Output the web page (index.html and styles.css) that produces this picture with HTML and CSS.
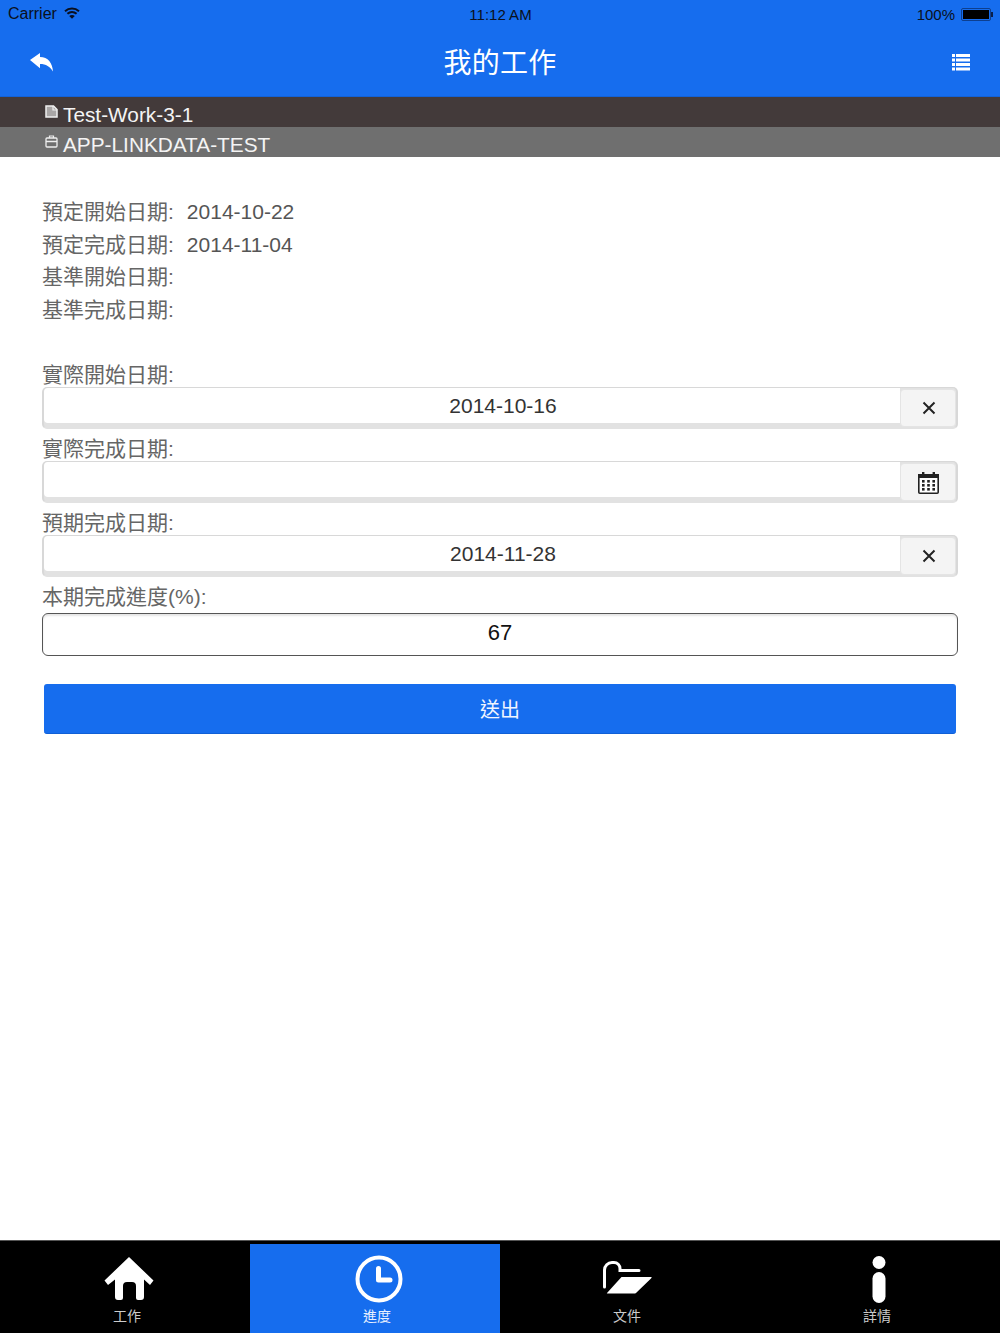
FILE: index.html
```html
<!DOCTYPE html>
<html lang="zh-Hant">
<head>
    <meta charset="UTF-8">
    <meta name="viewport" content="width=device-width, initial-scale=1.0">
    <title>我的工作</title>
    <link rel="stylesheet" href="styles.css">
</head>
<body>
    <div class="page">
        <div class="top">
            <div class="status">
                <div class="status-left">
                    <span>Carrier</span>
                    <svg class="wifi" width="16" height="12" viewBox="0 0 16 12">
                        <path d="M1 4.200C5 .6 11 .6 15 4.200" fill="none" stroke="#0a1020" stroke-width="2"/>
                        <path d="M3.400 6.800c2.700-2.300 6.500-2.300 9.200 0" fill="none" stroke="#0a1020" stroke-width="2"/>
                        <path d="M8 11.800 5.200 9c1.600-1.300 4-1.300 5.600 0z" fill="#0a1020"/>
                    </svg>
                </div>
                <div class="status-time">11:12 AM</div>
                <div class="status-right">
                    <span>100%</span>
                    <div class="battery"><div class="battery-fill"></div></div>
                    <div class="battery-tip"></div>
                </div>
            </div>
            <div class="nav">
                <svg width="23" height="19" viewBox="0 0 23 19">
                    <path d="M0 7 10 0v4c8 0 12.500 6 13 14.500C20 13.500 16 11 10 11v4.300z" fill="#fff"/>
                </svg>
                <div class="nav-title">我的工作</div>
                <svg class="nav-list" width="18" height="17" viewBox="0 0 18 17" fill="#fff">
                    <rect x="0" y="0" width="3" height="3"/><rect x="4" y="0" width="14" height="3"/>
                    <rect x="0" y="4.500" width="3" height="3"/><rect x="4" y="4.500" width="14" height="3"/>
                    <rect x="0" y="9" width="3" height="3"/><rect x="4" y="9" width="14" height="3"/>
                    <rect x="0" y="13.500" width="3" height="3"/><rect x="4" y="13.500" width="14" height="3"/>
                </svg>
            </div>
        </div>

        <div class="bar bar-dark">
            <svg class="bar-icon" width="13" height="13" viewBox="0 0 13 13">
                <path d="M1 1h7.500L12 4.500V12H1z" fill="#a9a6a6" stroke="#f0f0f0" stroke-width="1.500"/>
                <path d="M8 1v4h4" fill="none" stroke="#f0f0f0" stroke-width="1.200"/>
            </svg>
            <span>Test-Work-3-1</span>
        </div>
        <div class="bar bar-gray">
            <svg class="bar-icon" width="13" height="13" viewBox="0 0 13 13">
                <path d="M4.500 3V1h4v2" fill="none" stroke="#eee" stroke-width="1.200"/>
                <rect x="1" y="3" width="11" height="9" rx="1" fill="none" stroke="#eee" stroke-width="1.300"/>
                <path d="M1 6.500h11" stroke="#eee" stroke-width="1.500"/>
            </svg>
            <span>APP-LINKDATA-TEST</span>
        </div>

        <div class="content">
            <div class="info">
                <div class="info-row"><span class="info-label">預定開始日期:</span>2014-10-22</div>
                <div class="info-row"><span class="info-label">預定完成日期:</span>2014-11-04</div>
                <div class="info-row"><span class="info-label">基準開始日期:</span></div>
                <div class="info-row"><span class="info-label">基準完成日期:</span></div>
            </div>

            <div class="field">
                <label class="field-label">實際開始日期:</label>
                <div class="date-input">
                    <div class="date-value">2014-10-16</div>
                    <div class="date-btn">
                        <svg width="14" height="14" viewBox="0 0 14 14"><path d="M1.500 1.500l11 11M12.500 1.500l-11 11" stroke="#222" stroke-width="2"/></svg>
                    </div>
                </div>
            </div>
            <div class="field">
                <label class="field-label">實際完成日期:</label>
                <div class="date-input">
                    <div class="date-value"></div>
                    <div class="date-btn">
                        <svg class="cal" width="21" height="22" viewBox="0 0 21 22">
                            <rect x="0.800" y="2.800" width="19.400" height="18.400" rx="1" fill="#fff" stroke="#222" stroke-width="1.600"/>
                            <rect x="0" y="2" width="21" height="4" fill="#222"/>
                            <rect x="4" y="0" width="2.400" height="4" fill="#222"/><rect x="14.600" y="0" width="2.400" height="4" fill="#222"/>
                            <g fill="#222">
                                <rect x="4" y="8" width="2.600" height="2.600"/><rect x="9.200" y="8" width="2.600" height="2.600"/><rect x="14.400" y="8" width="2.600" height="2.600"/>
                                <rect x="4" y="12" width="2.600" height="2.600"/><rect x="9.200" y="12" width="2.600" height="2.600"/><rect x="14.400" y="12" width="2.600" height="2.600"/>
                                <rect x="4" y="16" width="2.600" height="2.600"/><rect x="9.200" y="16" width="2.600" height="2.600"/><rect x="14.400" y="16" width="2.600" height="2.600"/>
                            </g>
                        </svg>
                    </div>
                </div>
            </div>
            <div class="field">
                <label class="field-label">預期完成日期:</label>
                <div class="date-input">
                    <div class="date-value">2014-11-28</div>
                    <div class="date-btn">
                        <svg width="14" height="14" viewBox="0 0 14 14"><path d="M1.500 1.500l11 11M12.500 1.500l-11 11" stroke="#222" stroke-width="2"/></svg>
                    </div>
                </div>
            </div>
            <div class="field">
                <label class="field-label">本期完成進度(%):</label>
                <div class="num-input">67</div>
            </div>
            <button class="submit">送出</button>
        </div>

        <div class="tabs">
            <div class="tab">
                <div class="tab-icon">
                    <svg width="50" height="44" viewBox="0 0 50 44" fill="#fff">
                        <path d="M25 0 49.500 23.500 46 28 40 22.500V40a3 3 0 0 1-3 3h-3a2 2 0 0 1-2-2V29a4 4 0 0 0-4-4h-5a4 4 0 0 0-4 4v12a2 2 0 0 1-2 2h-3a3 3 0 0 1-3-3V22.500L4 28 .5 23.500z"/>
                    </svg>
                </div>
                <span>工作</span>
            </div>
            <div class="tab tab-active">
                <div class="tab-icon">
                    <svg width="48" height="48" viewBox="0 0 48 48">
                        <circle cx="24" cy="24" r="21.500" fill="none" stroke="#fff" stroke-width="4"/>
                        <path d="M23.500 13.500V25H35" fill="none" stroke="#fff" stroke-width="5" stroke-linecap="round" stroke-linejoin="round"/>
                    </svg>
                </div>
                <span>進度</span>
            </div>
            <div class="tab">
                <div class="tab-icon">
                    <svg class="folder" width="49" height="33" viewBox="0 0 49 33" fill="#fff">
                        <path d="M1.500 26V9A7.500 7.500 0 0 1 9 1.500h2a6 6 0 0 1 6 6v2h19" fill="none" stroke="#fff" stroke-width="3" stroke-linecap="round"/>
                        <path d="M4 32 18.500 16h29c1.500 0 1.500.5.500 1.500L34 31c-1 1-1.500 1.500-3 1.500H5c-1 0-1.500-.5-1-.5z"/>
                    </svg>
                </div>
                <span>文件</span>
            </div>
            <div class="tab">
                <div class="tab-icon">
                    <svg width="14" height="47" viewBox="0 0 14 47" fill="#fff">
                        <circle cx="7" cy="6.500" r="6.500"/>
                        <rect x="0.500" y="16" width="13" height="31" rx="6.500"/>
                    </svg>
                </div>
                <span>詳情</span>
            </div>
        </div>
    </div>
</body>
</html>
```

FILE: styles.css
```css
* {
    padding: 0;
    margin: 0;
    box-sizing: border-box;
}

body {
    font-family: "Liberation Sans", "Noto Sans CJK TC", sans-serif;
    background: #fff;
}

.page {
    display: flex;
    flex-direction: column;
    width: 1000px;
    height: 1333px;
    overflow: hidden;
}

.top {
    height: 97px;
    border-bottom: 1px solid #1262d8;
    background: #166dee;
}

.status {
    display: grid;
    grid-template-columns: 1fr auto 1fr;
    align-items: center;
    height: 28px;
    padding: 0 7px 0 8px;
    font-size: 16px;
    color: #0a1020;
}

.status-left, .status-right {
    display: flex;
    align-items: center;
}

.status-left {
    gap: 7px;
}

.status-time {
    font-size: 15px;
}

.status-right {
    justify-content: flex-end;
}

.status-right span {
    margin-right: 6px;
    font-size: 15px;
}

.battery {
    width: 30px;
    height: 13px;
    padding: 1px;
    border: 1px solid #0d3f8f;
    border-radius: 2px;
}

.battery-fill {
    height: 100%;
    background: #000;
}

.battery-tip {
    width: 2px;
    height: 5px;
    background: #0a1f4a;
}

.wifi {
    margin-top: -3px;
}

.nav {
    display: grid;
    grid-template-columns: 1fr auto 1fr;
    align-items: center;
    height: 69px;
    padding: 0 30px;
}

.nav-title {
    margin-top: -4px;
    color: #fff;
    font-size: 28px;
    letter-spacing: 0.3px;
}

.nav-list {
    justify-self: end;
}

.bar {
    display: flex;
    gap: 5px;
    height: 30px;
    padding: 4px 0 0 45px;
    color: #f4f4f4;
    font-size: 20.800px;
    line-height: 28px;
}

.bar-dark {
    background: #433a3a;
}

.bar-gray {
    background: #6f6f6f;
}

.bar-icon {
    margin-top: 4px;
}

.content {
    flex: 1;
    padding: 39px 42px 0;
}

.info {
    margin-bottom: 33px;
}

.info-row {
    height: 32.500px;
    color: #555;
    font-size: 21px;
    line-height: 32.500px;
}

.info-label {
    margin-right: 13px;
    color: #666;
}

.field {
    height: 74px;
}

.field-label {
    display: block;
    height: 28px;
    color: #666;
    font-size: 21px;
    line-height: 32px;
}

.date-input {
    display: flex;
    height: 42px;
    border: 2px solid #d8d8d8;
    border-top-width: 1px;
    border-bottom-color: #e2e2e2;
    border-radius: 5px;
    background: #e2e2e2;
}

.date-value {
    flex: 1;
    height: 35px;
    padding-left: 62px;
    border-radius: 4px 0 0 4px;
    background: #fff;
    color: #333;
    font-size: 21px;
    line-height: 35px;
    text-align: center;
}

.date-btn {
    display: flex;
    justify-content: center;
    align-items: center;
    width: 56px;
    margin-top: 1px;
    padding-left: 1px;
    border: 1px solid #e4e4e4;
    border-radius: 4px;
    background: #f4f4f4;
}

.cal {
    margin-top: 2px;
}

.num-input {
    height: 43px;
    margin-top: 4px;
    border: 1px solid #555;
    border-radius: 6px;
    box-shadow: inset 0 2px 2px #e6e6e6;
    color: #111;
    font-size: 22px;
    line-height: 38px;
    text-align: center;
}

.submit {
    display: block;
    width: 912px;
    height: 50px;
    margin: 29px auto 0;
    border: 0;
    border-bottom: 1px solid #0f5fd6;
    border-radius: 3px;
    background: #166dee;
    color: #f0f5ff;
    font-family: inherit;
    font-size: 20px;
}

.tabs {
    display: grid;
    grid-template-columns: repeat(4, 1fr);
    height: 93px;
    padding-top: 3px;
    border-top: 1px solid #555;
    background: #000;
}

.tab {
    display: flex;
    flex-direction: column;
    align-items: center;
    gap: 4px;
    height: 89px;
    padding: 11px 0 0 4px;
    color: #ccc;
    font-size: 14px;
    line-height: 18px;
}

.tab-icon {
    display: flex;
    justify-content: center;
    align-items: center;
    height: 48px;
    margin-left: 4px;
}

.folder {
    margin: -3px 0 0 -4px;
}

.tab-active {
    background: #166dee;
    color: #e8f0ff;
}
```
